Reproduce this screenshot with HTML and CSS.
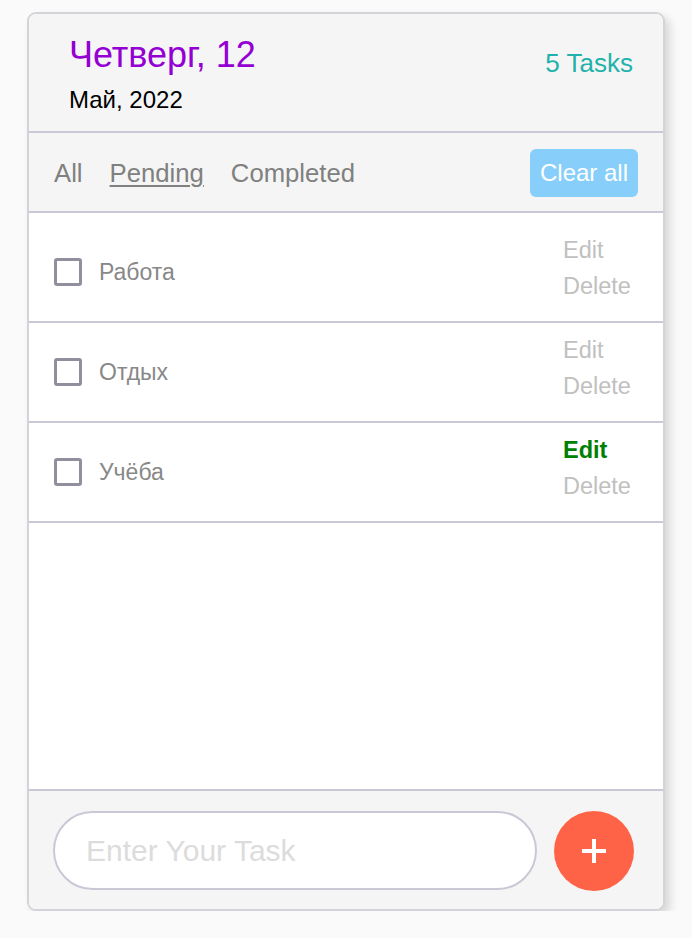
FILE: index.html
```html
<!DOCTYPE html>
<html lang="ru">
<head>
<meta charset="utf-8">
<title>Todo</title>
<link rel="stylesheet" href="styles.css">
</head>
<body>
<div class="card">
  <header class="header">
    <div class="date">
      <div class="day">Четверг, 12</div>
      <div class="month">Май, 2022</div>
    </div>
    <div class="count">5 Tasks</div>
  </header>
  <nav class="filters">
    <div class="tabs">
      <span class="tab">All</span>
      <span class="tab active">Pending</span>
      <span class="tab">Completed</span>
    </div>
    <button class="clear">Clear all</button>
  </nav>
  <ul class="list">
    <li class="task">
      <label class="label"><span class="box"></span><span class="name">Работа</span></label>
      <div class="actions"><span class="act">Edit</span><span class="act">Delete</span></div>
    </li>
    <li class="task">
      <label class="label"><span class="box"></span><span class="name">Отдых</span></label>
      <div class="actions"><span class="act">Edit</span><span class="act">Delete</span></div>
    </li>
    <li class="task">
      <label class="label"><span class="box"></span><span class="name">Учёба</span></label>
      <div class="actions"><span class="act edit-on">Edit</span><span class="act">Delete</span></div>
    </li>
  </ul>
  <footer class="footer">
    <input class="input" type="text" placeholder="Enter Your Task">
    <button class="add" aria-label="Add">
      <svg width="24" height="24" viewBox="0 0 24 24"><path d="M12 0V24M0 12H24" stroke="#fff" stroke-width="4"/></svg>
    </button>
  </footer>
</div>
</body>
</html>
```

FILE: styles.css
```css
* { box-sizing: border-box; }
html, body { margin: 0; padding: 0; }
body {
  background: #fafafa;
  font-family: "Liberation Sans", Arial, sans-serif;
  padding: 12px 27px 0;
}
.card {
  width: 638px;
  height: 899px;
  border: 2px solid #d4d4d8;
  border-radius: 9px;
  background: #fff;
  box-shadow: 5px 5px 10px rgba(0,0,0,0.14);
  display: flex;
  flex-direction: column;
  overflow: hidden;
}
.header {
  background: #f5f5f5;
  border-bottom: 2px solid #c9c9d6;
  height: 119px;
  padding: 21px 30px 0 40px;
  display: flex;
  justify-content: space-between;
  align-items: flex-start;
}
.day {
  color: #9400d3;
  font-size: 36px;
  line-height: 40px;
}
.month {
  color: #000;
  font-size: 24px;
  line-height: 28px;
  margin-top: 11px;
}
.count {
  color: #20b2aa;
  font-size: 26px;
  line-height: 30px;
  margin-top: 13px;
}
.filters {
  background: #f5f5f5;
  border-bottom: 2px solid #c9c9d6;
  height: 80px;
  padding: 0 25px 0 25px;
  display: flex;
  align-items: center;
  justify-content: space-between;
}
.tabs { display: flex; gap: 27px; }
.tab {
  color: #808080;
  font-size: 25.7px;
  line-height: 30px;
  margin-top: 2px;
}
.tab.active {
  text-decoration: underline;
  text-decoration-thickness: 2px;
  text-underline-offset: 3px;
}
.clear {
  font-family: inherit;
  background: #87cefa;
  color: #fff;
  border: none;
  border-radius: 6px;
  height: 48px;
  padding: 0 10px;
  font-size: 24px;
  margin-top: 2px;
}
.list {
  list-style: none;
  margin: 0;
  padding: 10px 0 0;
  flex: 1;
}
.task {
  height: 100px;
  border-bottom: 2px solid #c9c9d6;
  display: flex;
  justify-content: space-between;
  align-items: center;
  padding: 0 32px 0 25px;
}
.label { display: flex; align-items: center; gap: 17px; }
.box {
  width: 28px;
  height: 28px;
  border: 3px solid #8f8f9d;
  border-radius: 3px;
  background: #fff;
}
.name {
  color: #888;
  font-size: 23px;
  line-height: 28px;
}
.actions {
  display: flex;
  flex-direction: column;
  align-self: flex-start;
  margin-top: 9px;
  width: 68px;
}
.act {
  color: #c0c0c0;
  font-size: 23.5px;
  line-height: 36px;
}
.act.edit-on { color: #008000; font-weight: bold; }
.footer {
  background: #f5f5f5;
  border-top: 2px solid #c9c9d6;
  height: 120px;
  padding: 20px 29px 0 24px;
  display: flex;
  align-items: flex-start;
  gap: 17px;
}
.input {
  flex: 1;
  height: 79px;
  border: 2px solid #c9c9d6;
  border-radius: 40px;
  background: #fff;
  padding: 0 20px 0 31px;
  font-family: inherit;
  font-size: 30px;
  outline: none;
}
.input::placeholder { color: #dcdcdc; }
.add {
  width: 80px;
  height: 80px;
  border-radius: 50%;
  border: none;
  background: #ff6347;
  display: flex;
  align-items: center;
  justify-content: center;
  padding: 0;
  flex: none;
}
.add svg { display: block; }
```
